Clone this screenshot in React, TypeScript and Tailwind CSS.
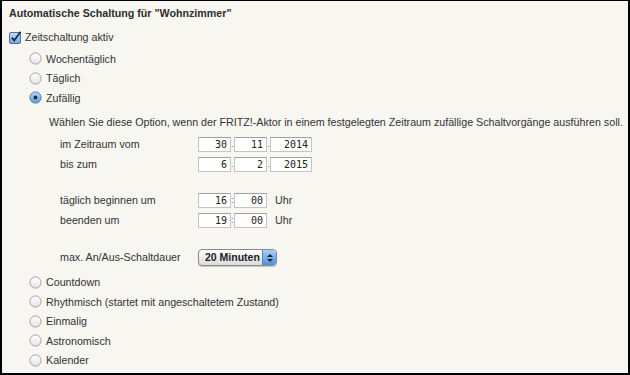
import React from "react";

// little radio button in the old mac look
const Radio = ({ checked }: { checked?: boolean }) => (
  <svg width="13" height="13" viewBox="0 0 13 13" className="shrink-0">
    <defs>
      <linearGradient id="rOff" x1="0" y1="0" x2="0" y2="1">
        <stop offset="0" stopColor="#ffffff" />
        <stop offset="1" stopColor="#e4e4e4" />
      </linearGradient>
      <linearGradient id="rOn" x1="0" y1="0" x2="0" y2="1">
        <stop offset="0" stopColor="#b9d6f5" />
        <stop offset="1" stopColor="#5f9fe3" />
      </linearGradient>
    </defs>
    <circle
      cx="6.5"
      cy="6.5"
      r="5.6"
      fill={checked ? "url(#rOn)" : "url(#rOff)"}
      stroke={checked ? "#4a6f9c" : "#9a9a9a"}
      strokeWidth="0.9"
    />
    {checked && <circle cx="6.5" cy="6.5" r="1.9" fill="#1d2b3d" />}
  </svg>
);

const Check = () => (
  <svg width="13" height="13" viewBox="0 0 13 13" className="shrink-0">
    <defs>
      <linearGradient id="cb" x1="0" y1="0" x2="0" y2="1">
        <stop offset="0" stopColor="#c6ddf6" />
        <stop offset="1" stopColor="#6aa6e6" />
      </linearGradient>
    </defs>
    <rect x="0.5" y="1.5" width="11" height="11" rx="1.5" fill="url(#cb)" stroke="#4a6f9c" />
    <path d="M2.8 6.6 L5.2 9.6 L11.6 0.8" fill="none" stroke="#1d2b3d" strokeWidth="1.8" />
  </svg>
);

const Box = ({ v, w }: { v: string; w: string }) => (
  <div
    className={`${w} h-[15px] bg-white border border-[#c4c4c4] border-t-[#a0a0a0] flex items-center justify-end pr-[3px] text-[10px] text-[#222] leading-none`}
    style={{ fontFamily: '"DejaVu Sans Mono", monospace' }}
  >
    {v}
  </div>
);

const Sep = ({ c }: { c: string }) => (
  <span className="w-[3px] text-[9px] text-[#777] text-center leading-none">{c}</span>
);

const RadioRow = ({ label, checked }: { label: string; checked?: boolean }) => (
  <div className="h-[19.5px] flex items-center pl-[20px] gap-[4px]">
    <Radio checked={checked} />
    <span>{label}</span>
  </div>
);

const FormRow = ({ label, children }: { label: string; children?: React.ReactNode }) => (
  <div className="h-5 flex items-center pl-[51px]">
    <span className="w-[138px]">{label}</span>
    {children}
  </div>
);

export default function App() {
  return (
    <div
      className="w-[630px] h-[375px] bg-[#f7f6f1] border-black border-x-2 border-b-2 border-t text-[10.7px] text-[#333] flex flex-col pl-[7px]"
      style={{ fontFamily: '"Liberation Sans", Arial, sans-serif' }}
    >
      <div className="h-5 mt-[2px] flex items-center font-bold text-[#2e2e2e]">
        Automatische Schaltung für "Wohnzimmer"
      </div>

      <div className="h-5 mt-[4px] flex items-center gap-[3px]">
        <Check />
        <span>Zeitschaltung aktiv</span>
      </div>

      <div className="mt-[2px]">
        <RadioRow label="Wochentäglich" />
        <RadioRow label="Täglich" />
        <RadioRow label="Zufällig" checked />
      </div>

      <div className="h-5 mt-[5px] flex items-center pl-[40px] whitespace-nowrap">
        Wählen Sie diese Option, wenn der FRITZ!-Aktor in einem festgelegten Zeitraum zufällige Schaltvorgänge ausführen soll.
      </div>

      <div className="mt-[2px]">
        <FormRow label="im Zeitraum vom">
          <Box v="30" w="w-[33px]" />
          <Sep c="." />
          <Box v="11" w="w-[33px]" />
          <Sep c="." />
          <Box v="2014" w="w-[42px]" />
        </FormRow>
        <FormRow label="bis zum">
          <Box v="6" w="w-[33px]" />
          <Sep c="." />
          <Box v="2" w="w-[33px]" />
          <Sep c="." />
          <Box v="2015" w="w-[42px]" />
        </FormRow>
      </div>

      <div className="mt-[16px]">
        <FormRow label="täglich beginnen um">
          <Box v="16" w="w-[33px]" />
          <Sep c=":" />
          <Box v="00" w="w-[33px]" />
          <span className="ml-[8px]">Uhr</span>
        </FormRow>
        <FormRow label="beenden um">
          <Box v="19" w="w-[33px]" />
          <Sep c=":" />
          <Box v="00" w="w-[33px]" />
          <span className="ml-[8px]">Uhr</span>
        </FormRow>
      </div>

      <div className="mt-[17px]">
        <FormRow label="max. An/Aus-Schaltdauer">
          <div className="w-[79px] h-[17px] rounded-[4px] border border-[#8a8a8a] bg-gradient-to-b from-white to-[#dcdcdc] flex items-center shadow-[0_1px_1px_rgba(0,0,0,0.2)] overflow-hidden">
            <span className="flex-1 pl-[6px] text-[10.5px] font-bold text-[#222] leading-none whitespace-nowrap">20 Minuten</span>
            <div className="w-[14px] h-full bg-gradient-to-b from-[#a9cdf3] to-[#4d90dc] border-l border-[#5d86b8] flex flex-col items-center justify-center gap-[2px]">
              <svg width="6" height="3" viewBox="0 0 6 3"><path d="M0 3 L3 0 L6 3Z" fill="#1b2533" /></svg>
              <svg width="6" height="3" viewBox="0 0 6 3"><path d="M0 0 L3 3 L6 0Z" fill="#1b2533" /></svg>
            </div>
          </div>
        </FormRow>
      </div>

      <div className="mt-[5px]">
        <RadioRow label="Countdown" />
        <RadioRow label="Rhythmisch (startet mit angeschaltetem Zustand)" />
        <RadioRow label="Einmalig" />
        <RadioRow label="Astronomisch" />
        <RadioRow label="Kalender" />
      </div>
    </div>
  );
}
